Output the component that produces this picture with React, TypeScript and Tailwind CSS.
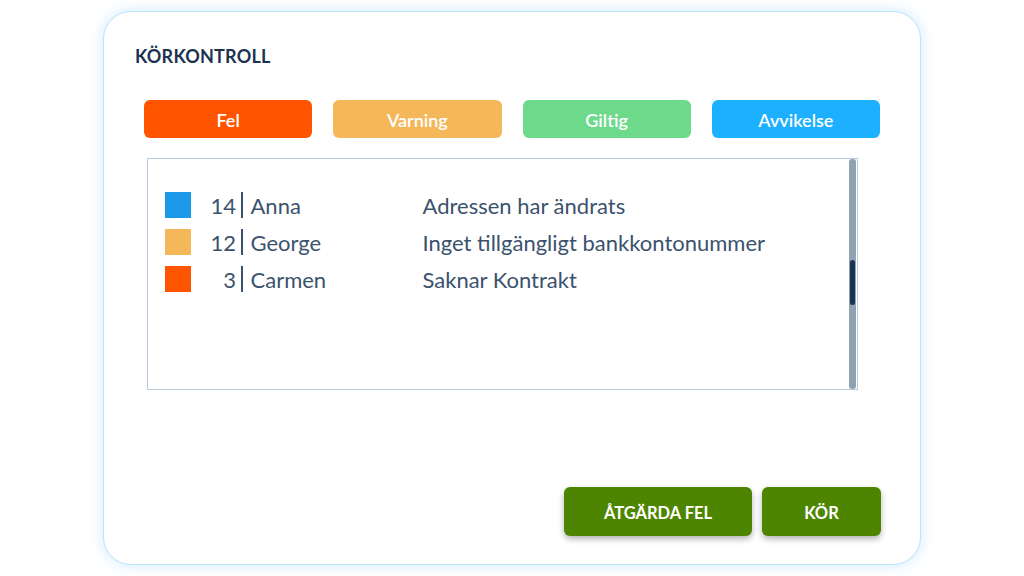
const filters = [
  { label: 'Fel', cls: 'bg-[#ff5500]' },
  { label: 'Varning', cls: 'bg-[#f4b85a]' },
  { label: 'Giltig', cls: 'bg-[#6dd98b]' },
  { label: 'Avvikelse', cls: 'bg-[#1cb0ff]' },
];

const rows = [
  { nr: 14, name: 'Anna', msg: 'Adressen har ändrats', swatch: 'bg-[#1c98e8]' },
  { nr: 12, name: 'George', msg: 'Inget tillgängligt bankkontonummer', swatch: 'bg-[#f4b85a]' },
  { nr: 3, name: 'Carmen', msg: 'Saknar Kontrakt', swatch: 'bg-[#ff5500]' },
];

export default function App() {
  return (
    <div className="flex h-[576px] w-[1024px] items-center justify-center bg-white font-['Lato',sans-serif]">
      <div className="flex h-[554px] w-[818px] flex-col rounded-[28px] border border-[#bfe2fb] bg-white shadow-[0_0_14px_rgba(150,205,245,0.45)]">
        <h1 className="pl-[31px] pt-[34px] text-[18px] font-bold leading-[20px] tracking-[0.2px] text-[#1b3350]">
          KÖRKONTROLL
        </h1>

        <div className="mx-[40px] mt-[34px] grid grid-cols-4 gap-[21px]">
          {filters.map((f) => (
            <button
              key={f.label}
              className={`h-[38px] rounded-[6px] pt-[3px] text-[18px] font-semibold text-white ${f.cls}`}
            >
              {f.label}
            </button>
          ))}
        </div>

        <div className="relative mx-[43px] mt-[20px] h-[232px] w-[711px] border border-[#b9c9d9] bg-white">
          <div className="flex flex-col gap-[11px] pl-[17px] pt-[33px]">
            {rows.map((r) => (
              <div key={r.nr} className="flex h-[26px] items-center text-[22px] text-[#3b526d]">
                <span className={`h-[26px] w-[26px] ${r.swatch}`} />
                <span className="ml-[17px] w-[28px] text-right">{r.nr}</span>
                <span className="ml-[5px] mr-[8px] h-[26px] w-[1.5px] bg-[#3b526d]" />
                <span className="w-[172px]">{r.name}</span>
                <span>{r.msg}</span>
              </div>
            ))}
          </div>
          <div className="absolute right-[1px] top-0 h-full w-[7px] rounded-[3px] bg-[#8ea2b4]">
            <div className="mx-auto mt-[101px] h-[45px] w-[5px] rounded-[3px] bg-[#1b3350]" />
          </div>
        </div>

        <div className="mt-auto mb-[28px] mr-[39px] flex justify-end gap-[10px]">
          <button className="h-[49px] w-[188px] rounded-[6px] bg-[#4e8500] pt-[3px] text-[16.5px] font-bold text-white shadow-[0_3px_6px_rgba(0,0,0,0.3)]">
            ÅTGÄRDA FEL
          </button>
          <button className="h-[49px] w-[119px] rounded-[6px] bg-[#4e8500] pt-[3px] text-[16.5px] font-bold text-white shadow-[0_3px_6px_rgba(0,0,0,0.3)]">
            KÖR
          </button>
        </div>
      </div>
    </div>
  );
}
